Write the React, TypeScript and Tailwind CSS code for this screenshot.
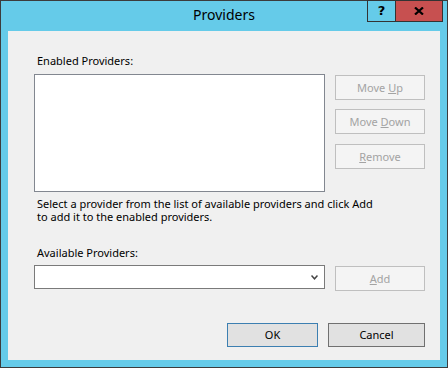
import React from 'react';

const font = { fontFamily: '"Noto Sans", "Open Sans", sans-serif' };

const SideButton: React.FC<{ children: React.ReactNode; className?: string }> = ({ children, className = '' }) => (
  <button
    disabled
    className={`w-[90px] h-[25px] border border-[#bfbfbf] bg-[#f4f4f4] text-[11px] leading-[15px] text-[#a3a3a3] ${className}`}
  >
    {children}
  </button>
);

const App: React.FC = () => {
  return (
    <div className="w-[448px] h-[368px] border border-[#3c3c3c] bg-[#65cbe9] flex flex-col relative" style={font}>
      {/* title bar */}
      <div className="h-[30px] flex justify-center">
        <span className="text-[14px] leading-[18px] pt-[5px] text-black">Providers</span>
      </div>
      <div className="absolute top-[-1px] right-[4px] flex">
        <div className="w-[29px] h-[22px] border border-[#333] flex items-center justify-center text-[13px] font-bold text-black" style={{ fontFamily: '"DejaVu Sans", sans-serif' }}>
          ?
        </div>
        <div className="w-[47px] h-[22px] border border-l-0 border-[#333] bg-[#c75050] flex items-center justify-center">
          <svg width="10" height="8" viewBox="0 0 10 8">
            <path d="M1 0.5 L9 7.5 M9 0.5 L1 7.5" stroke="#000" strokeWidth="2.2" />
          </svg>
        </div>
      </div>

      {/* client area */}
      <div className="mx-[7px] h-[329px] bg-[#f0f0f0] flex flex-col pl-[26px] pt-[22px] text-[11px] text-black">
        <div className="h-[15px] leading-[15px] ml-[3px]">Enabled Providers:</div>
        <div className="flex mt-[6px]">
          <div className="w-[291px] h-[118px] bg-white border border-[#828790]" />
          <div className="flex flex-col ml-[10px] pt-[1px]">
            <SideButton>
              Move <span className="underline">U</span>p
            </SideButton>
            <SideButton className="mt-[9px]">
              Move <span className="underline">D</span>own
            </SideButton>
            <SideButton className="mt-[10px]">
              <span className="underline">R</span>emove
            </SideButton>
          </div>
        </div>
        <div className="mt-[5px] ml-[3px] leading-[13px] whitespace-nowrap">
          Select a provider from the list of available providers and click Add
          <br />
          to add it to the enabled providers.
        </div>
        <div className="mt-[22px] ml-[3px] h-[15px] leading-[15px]">Available Providers:</div>
        <div className="flex items-start mt-[5px]">
          <div className="w-[291px] h-[24px] bg-white border border-[#7a7a7a] flex items-center justify-end pr-[6px]">
            <svg width="7" height="5" viewBox="0 0 7 5">
              <path d="M0.5 0.5 L3.5 3.8 L6.5 0.5" stroke="#444" strokeWidth="1.5" fill="none" />
            </svg>
          </div>
          <SideButton className="ml-[10px] mt-[1px] h-[24px]">
            <span className="underline">A</span>dd
          </SideButton>
        </div>
        <div className="flex justify-end gap-[10px] pr-[15px] mt-[32px]">
          <button className="w-[91px] h-[24px] border border-[#3c7fb1] bg-[#e1e1e1] text-[11px] text-black">OK</button>
          <button className="w-[97px] h-[24px] border border-[#707070] bg-[#e1e1e1] text-[11px] text-black">Cancel</button>
        </div>
      </div>
    </div>
  );
};

export default App;
